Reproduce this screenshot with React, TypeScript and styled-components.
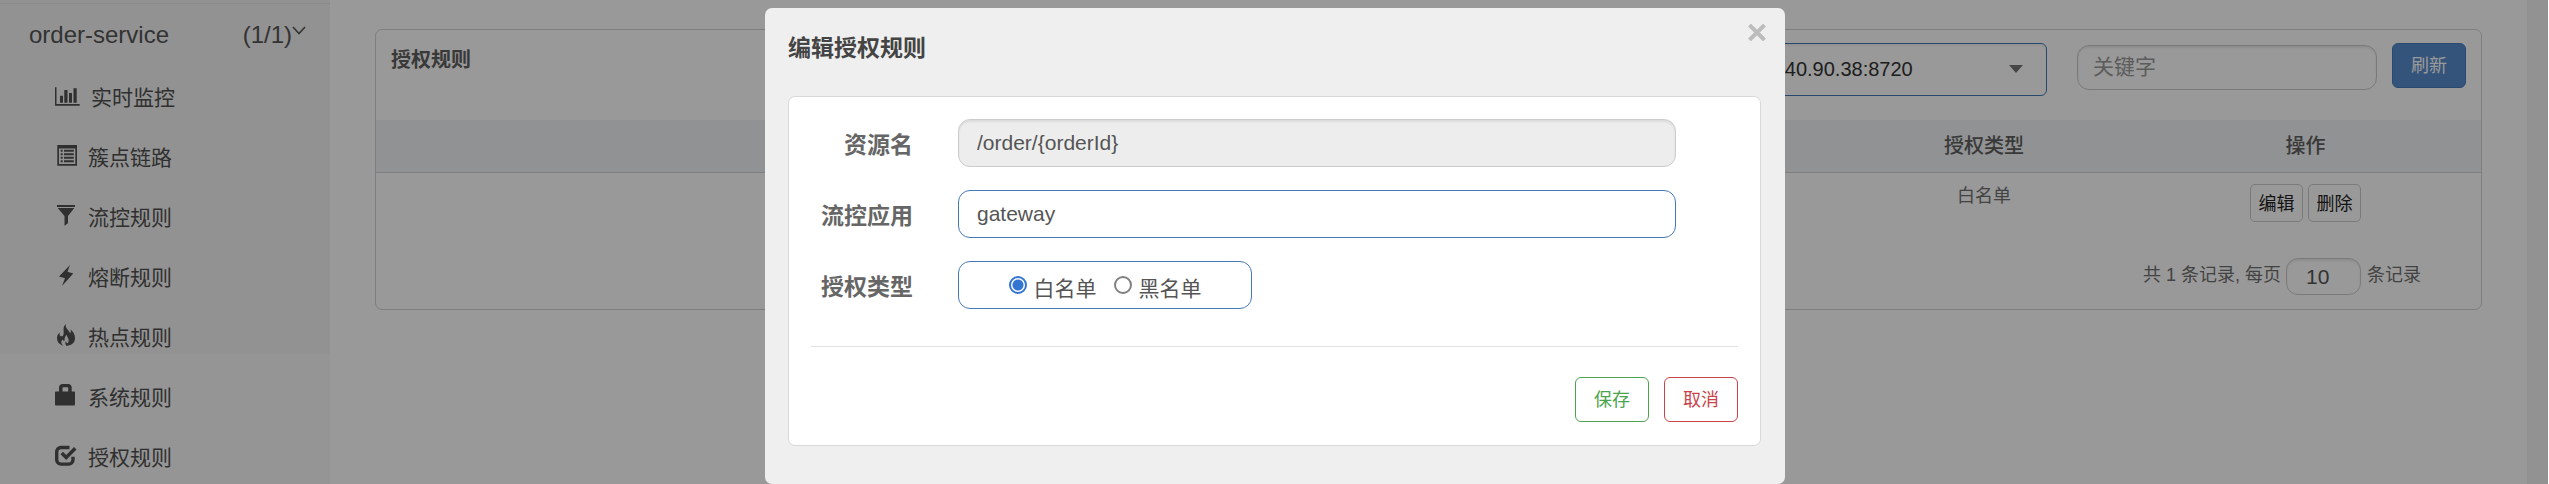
import React from "react";
import styled, { createGlobalStyle, css } from "styled-components";

const GlobalStyle = createGlobalStyle`
  *, *::before, *::after { box-sizing: border-box; }
  body {
    margin: 0;
    background: #fff;
    color: #666;
    font-family: "Liberation Sans", "Noto Sans CJK SC", sans-serif;
    font-size: 18px;
  }
  button, input, select { font-family: inherit; margin: 0; }
`;

const Page = styled.div`
  display: flex;
  height: 100vh;
  overflow: hidden;
`;

const Sidebar = styled.nav`
  flex: 0 0 330px;
  padding-top: 3px;
  background: linear-gradient(#f4f4f4 0 354px, #f8f8f8 354px);
`;

const ServiceLink = styled.a`
  display: flex;
  align-items: center;
  height: 63px;
  padding: 0 24px 0 29px;
  border-top: 1px solid #e7e7e7;
  color: #555;
  font-size: 24px;
  text-decoration: none;
`;

const ServiceName = styled.span`
  flex: 1;
`;

const Chevron = styled.svg`
  width: 14px;
  height: 10px;
  margin-bottom: 8px;
`;

const MenuList = styled.ul`
  margin: 0;
  padding: 0;
  list-style: none;
`;

const MenuLink = styled.a`
  display: flex;
  align-items: center;
  gap: 11px;
  height: 60px;
  padding-left: 55px;
  color: #505050;
  font-size: 21px;
  text-decoration: none;

  svg { flex: none; overflow: visible; }
`;

const Content = styled.main`
  flex: 1;
  min-width: 0;
  padding: 29px 45px 0;
`;

const ScrollTrack = styled.div`
  flex: 0 0 22px;
  background: #f4f4f4;
  border-right: 1px solid #fff;
`;

const Card = styled.section`
  border: 1px solid #d4d4d4;
  border-radius: 7px;
  padding-bottom: 14px;
`;

const CardHeader = styled.header`
  display: flex;
  align-items: flex-start;
  height: 90px;
  padding: 13px 15px 0;
`;

const CardTitle = styled.h1`
  flex: 1;
  margin: 0;
  color: #606060;
  font-size: 20px;
  line-height: 34px;
`;

const MachineBox = styled.div`
  position: relative;
  width: 309px;
  margin-right: 30px;
`;

const MachineSelect = styled.select`
  width: 100%;
  height: 53px;
  padding: 0 16px 2px 18px;
  border: 1px solid #447ab8;
  border-radius: 6px;
  background: #fff;
  box-shadow: inset 0 2px 2px #0000000d;
  color: #333;
  font-size: 20px;
  appearance: none;
`;

const SelectCaret = styled.svg`
  position: absolute;
  right: 24px;
  top: 22px;
  width: 14px;
  height: 8px;
  pointer-events: none;
`;

const field = css`
  border: 1px solid #ccc;
  border-radius: 12px;
  background: #fff;
  box-shadow: inset 0 2px 2px #00000013;
  color: #555;
  font-size: 21px;
`;

const SearchInput = styled.input`
  ${field}
  width: 300px;
  height: 45px;
  margin: 2px 15px 0 0;
  padding: 0 15px 2px;
  &::placeholder { color: #999; opacity: 1; }
`;

const Button = styled.button<{ $tone: "blue" | "green" | "red" }>`
  width: 74px;
  height: 45px;
  padding: 0 0 3px;
  border: 1px solid
    ${(p) => ({ blue: "#457cbb", green: "#4ba44d", red: "#c9444a" })[p.$tone]};
  border-radius: 6px;
  background: ${(p) => (p.$tone === "blue" ? "#578ccd" : "#fff")};
  color: ${(p) => ({ blue: "#fff", green: "#4ba44d", red: "#c9444a" })[p.$tone]};
  font-size: 18px;
`;

const RuleTable = styled.table`
  width: 100%;
  table-layout: fixed;
  border-collapse: collapse;

  th {
    height: 52px;
    padding: 0 0 2px;
    border-bottom: 1px solid #d4d4d4;
    background: #f0f3f6;
    color: #606060;
    font-size: 20px;
    font-weight: 500;
  }
  td {
    height: 62px;
    padding: 11px 0 0;
    text-align: center;
    vertical-align: top;
    color: #707070;
    line-height: 24px;
  }
`;

const TypeCol = styled.col`
  width: 292px;
`;

const ActionCol = styled.col`
  width: 351px;
`;

const RowActions = styled.div`
  display: flex;
  justify-content: center;
  gap: 5px;
`;

const RowButton = styled.button`
  width: 53px;
  height: 38px;
  padding: 0 0 2px;
  border: 1px solid #ccc;
  border-radius: 5px;
  background: #fff;
  color: #222;
  font-size: 18px;
`;

const Pager = styled.footer`
  display: flex;
  justify-content: flex-end;
  gap: 5px;
  margin-top: 24px;
  padding-right: 60px;
  color: #707070;
  line-height: 34px;
`;

const PageSize = styled.input`
  ${field}
  width: 75px;
  height: 37px;
  margin-right: 1px;
  padding: 0 19px;
`;

const Backdrop = styled.div`
  position: fixed;
  inset: 0 1px 0 0;
  padding: 8px 0 0 2px;
  background: rgba(0, 0, 0, 0.4);
`;

const Dialog = styled.div`
  position: relative;
  width: 1020px;
  max-width: 100%;
  margin: 0 auto;
  padding: 22px 24px 38px 23px;
  border-radius: 7px;
  background: #efefef;
`;

const DialogTitle = styled.h2`
  margin: 0 0 30px;
  color: #444;
  font-size: 23px;
  line-height: 36px;
`;

const CloseButton = styled.button`
  position: absolute;
  top: 16px;
  right: 19px;
  display: flex;
  padding: 0;
  border: 0;
  background: none;
`;

const DialogPanel = styled.form`
  padding: 22px 22px 23px;
  border: 1px solid #d9d9d9;
  border-radius: 7px;
  background: #fff;
`;

const FormRow = styled.div`
  display: flex;
  height: 48px;
  margin-bottom: 23px;
`;

const rowLabel = css`
  flex: 0 0 102px;
  margin-right: 45px;
  color: #666;
  font-size: 23px;
  font-weight: 700;
  line-height: 53px;
  text-align: right;
`;

const RowLabel = styled.label`
  ${rowLabel}
`;

const GroupLabel = styled.span`
  ${rowLabel}
`;

const TextField = styled.input<{ $active?: boolean }>`
  ${field}
  flex: 1;
  min-width: 0;
  margin-right: 62px;
  padding: 0 18px;
  ${(p) => p.$active && css`border-color: #447ab8; box-shadow: none;`}
  &:disabled { background: #ededed; }
`;

const RadioGroup = styled.div`
  display: flex;
  align-items: center;
  justify-content: center;
  gap: 17px;
  width: 294px;
  border: 1px solid #447ab8;
  border-radius: 12px;
`;

const RadioLabel = styled.label`
  display: flex;
  align-items: center;
  gap: 7px;
  padding-top: 4px;
  color: #555;
  font-size: 21px;
`;

const Radio = styled.input`
  width: 18px;
  height: 18px;
  margin-bottom: 4px;
  border: 2px solid #808080;
  border-radius: 50%;
  background: #fff;
  appearance: none;
  &:checked {
    border-color: #3375d0;
    background: radial-gradient(circle, #3375d0 5px, #fff 6px);
  }
`;

const Divider = styled.hr`
  margin: 37px 0 30px;
  border: 0;
  border-top: 1px solid #e2e2e2;
`;

const DialogActions = styled.div`
  display: flex;
  justify-content: flex-end;
  gap: 15px;
`;

const Icon = ({ width = 22, children }: { width?: number; children: React.ReactNode }) => (
  <svg width={width} height={24} viewBox={`0 0 ${width} 24`} fill="currentColor" aria-hidden="true">
    {children}
  </svg>
);

const menu = [
  {
    text: "实时监控",
    icon: (
      <Icon width={25}>
        <path d="M0 3.300h1.500v16.600H24.700v1.800H0zM5 11.700h3v7H5zM9.300 6h3.200v12.700H9.300zM14 9h3v9.700h-3zM18.500 4.300h3.200v14.400h-3.200z" />
      </Icon>
    ),
  },
  {
    text: "簇点链路",
    icon: (
      <Icon>
        <path
          fillRule="evenodd"
          d="M2.300 1h19.700v20.700H2.300zM4 4.500v15.500h16.300V4.500zM5.700 5.800h2v1.900h-2zM9 5.800h9.800v1.900H9zM5.700 9.300h2v1.900h-2zM9 9.300h9.800v1.900H9zM5.700 12.800h2v1.900h-2zM9 12.800h9.800v1.900H9zM5.700 16.300h2v1.900h-2zM9 16.300h9.800v1.900H9z"
        />
      </Icon>
    ),
  },
  {
    text: "流控规则",
    icon: (
      <Icon>
        <path d="M2 1h18v2H2zM2.700 4h16.600L13 12v7.200L9.500 21.800V12z" />
      </Icon>
    ),
  },
  {
    text: "熔断规则",
    icon: (
      <Icon>
        <path d="M15 1 4 12.500l6 1.800L7 21.900 18.300 9.500 12.500 7.800z" />
      </Icon>
    ),
  },
  {
    text: "热点规则",
    icon: (
      <Icon>
        <path d="M11 0C6.800 3.500 9.500 7.500 8.500 10.500 8 12.500 6 13 5 11.500c-.6-1-.5-2 .1-3.200C3 9.800 2 11.800 2 14c0 4 2.500 6.700 6.200 7.600-2.200-1.800-2.400-4.200-.8-6.200.5 1 1.200 1.500 2.200 1.400-.2-2.700.4-4.600 2-6.100.2 2 1.800 3 2 5 .2 1.400-.2 2.500-1 3.500-1-.2-1.500-1-1.600-2.200-1 1.500-1 3.500.6 4.900C16.700 21.500 20 18.700 20 14.300c0-3.700-1.700-6.500-4.500-9 .6 1.700.4 3-.3 4.200C14.700 6.500 9.500 4.500 11 0z" />
      </Icon>
    ),
  },
  {
    text: "系统规则",
    icon: (
      <Icon>
        <path
          fillRule="evenodd"
          d="M4 7.500V3.500C4 1.500 5.500 0 7.500 0h5.700c2 0 3.500 1.500 3.500 3.500v4h2.100c.8 0 1.200.5 1.200 1.200v11.600c0 .8-.5 1.300-1.200 1.300H1.200c-.7 0-1.200-.5-1.200-1.300V8.700c0-.7.500-1.200 1.200-1.200zM7.500 7.500h5.700V4c0-.4-.3-.7-.7-.7H8.200c-.4 0-.7.300-.7.700z"
        />
      </Icon>
    ),
  },
  {
    text: "授权规则",
    icon: (
      <Icon>
        <path
          d="M14.500 3.500H6A4.300 4.300 0 0 0 1.700 7.800v8A4.300 4.300 0 0 0 6 20.100h7.700a4.300 4.300 0 0 0 4.300-4.300v-3"
          fill="none"
          stroke="currentColor"
          strokeWidth="3.400"
        />
        <path d="M5.500 10.200 8 7.700l3.200 3.200 7.800-7.800 2.500 2.400L11.200 15.900z" />
      </Icon>
    ),
  },
];

export default function App() {
  return (
    <>
      <GlobalStyle />
      <Page>
        <Sidebar>
          <ServiceLink href="#service">
            <ServiceName>order-service</ServiceName>
            <span>(1/1)</span>
            <Chevron viewBox="0 0 14 10" fill="none" stroke="currentColor" strokeWidth="1.600">
              <path d="m1 1 6 6.500L13 1" />
            </Chevron>
          </ServiceLink>
          <MenuList>
            {menu.map((item) => (
              <li key={item.text}>
                <MenuLink href="#menu">
                  {item.icon}
                  {item.text}
                </MenuLink>
              </li>
            ))}
          </MenuList>
        </Sidebar>

        <Content>
          <Card>
            <CardHeader>
              <CardTitle>授权规则</CardTitle>
              <MachineBox>
                <MachineSelect aria-label="机器">
                  <option>10.40.90.38:8720</option>
                </MachineSelect>
                <SelectCaret viewBox="0 0 14 8">
                  <path d="M0 0h14L7 8z" fill="#777" />
                </SelectCaret>
              </MachineBox>
              <SearchInput placeholder="关键字" aria-label="关键字" />
              <Button type="button" $tone="blue">刷新</Button>
            </CardHeader>
            <RuleTable>
              <colgroup>
                <col />
                <TypeCol />
                <ActionCol />
              </colgroup>
              <thead>
                <tr>
                  <th aria-label="资源名" />
                  <th>授权类型</th>
                  <th>操作</th>
                </tr>
              </thead>
              <tbody>
                <tr>
                  <td />
                  <td>白名单</td>
                  <td>
                    <RowActions>
                      <RowButton type="button">编辑</RowButton>
                      <RowButton type="button">删除</RowButton>
                    </RowActions>
                  </td>
                </tr>
              </tbody>
            </RuleTable>
            <Pager>
              <span>共 1 条记录, 每页</span>
              <PageSize defaultValue="10" aria-label="每页条数" />
              <span>条记录</span>
            </Pager>
          </Card>
        </Content>
        <ScrollTrack />
      </Page>

      <Backdrop>
        <Dialog role="dialog" aria-labelledby="dialog-title">
          <CloseButton type="button" aria-label="关闭">
            <svg width="18" height="17" viewBox="0 0 18 17" fill="none" stroke="#bcbcbc" strokeWidth="4">
              <path d="m1.500 1 15 15M16.500 1l-15 15" />
            </svg>
          </CloseButton>
          <DialogTitle id="dialog-title">编辑授权规则</DialogTitle>
          <DialogPanel>
            <FormRow>
              <RowLabel htmlFor="resource">资源名</RowLabel>
              <TextField id="resource" defaultValue="/order/{orderId}" disabled />
            </FormRow>
            <FormRow>
              <RowLabel htmlFor="limit-app">流控应用</RowLabel>
              <TextField id="limit-app" defaultValue="gateway" $active />
            </FormRow>
            <FormRow>
              <GroupLabel id="strategy">授权类型</GroupLabel>
              <RadioGroup role="radiogroup" aria-labelledby="strategy">
                <RadioLabel>
                  <Radio type="radio" name="strategy" defaultChecked />
                  白名单
                </RadioLabel>
                <RadioLabel>
                  <Radio type="radio" name="strategy" />
                  黑名单
                </RadioLabel>
              </RadioGroup>
            </FormRow>
            <Divider />
            <DialogActions>
              <Button type="button" $tone="green">保存</Button>
              <Button type="button" $tone="red">取消</Button>
            </DialogActions>
          </DialogPanel>
        </Dialog>
      </Backdrop>
    </>
  );
}
